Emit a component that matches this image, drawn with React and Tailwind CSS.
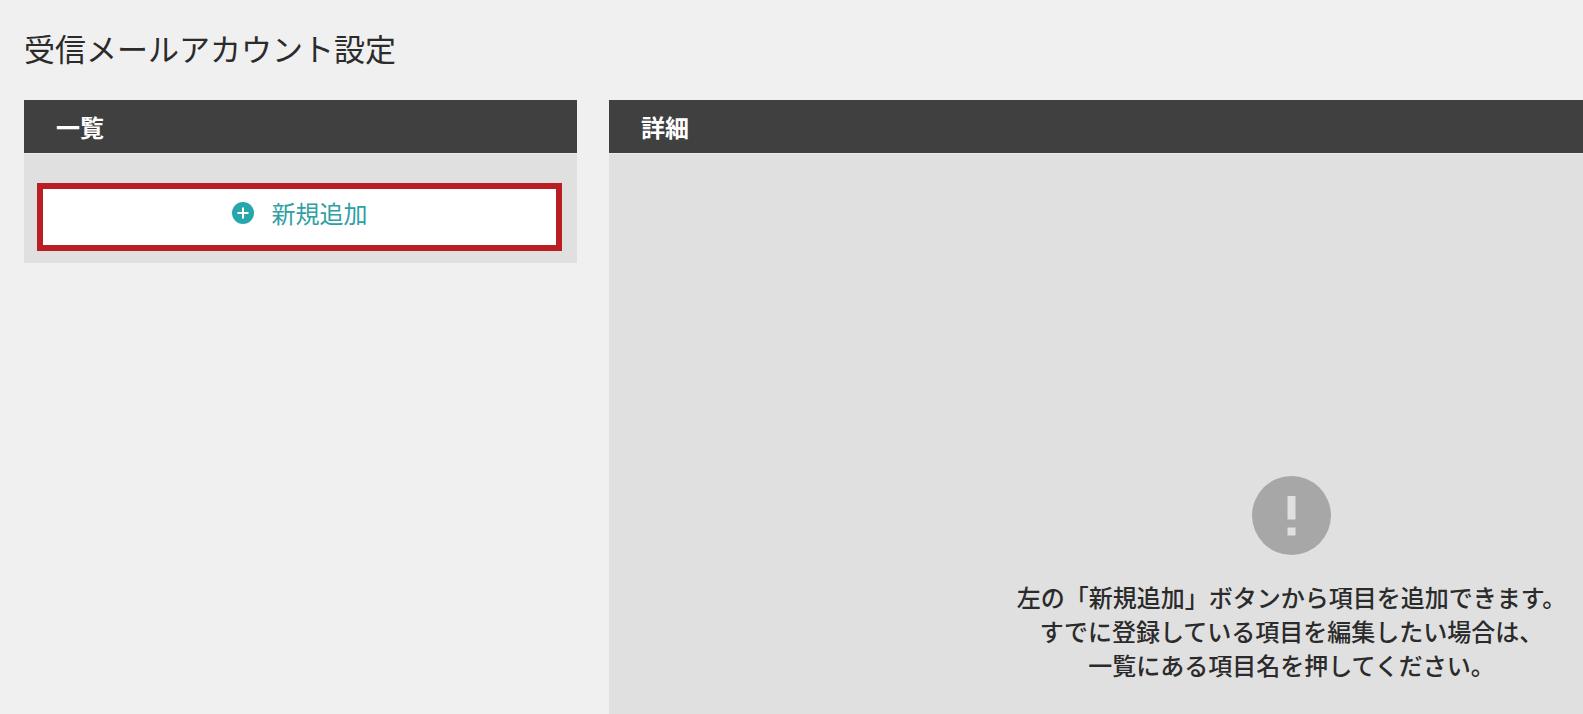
function PlusCircleIcon() {
  return (
    <svg viewBox="0 0 22 22" className="h-[22px] w-[22px] shrink-0" aria-hidden="true">
      <circle cx="11" cy="11" r="11" fill="#27a7ab" />
      <path d="M11 5.5v11M5.5 11h11" stroke="#fff" strokeWidth="2" />
    </svg>
  )
}

function NoticeIcon() {
  return (
    <svg viewBox="0 0 79 79" className="h-[79px] w-[79px]" aria-hidden="true">
      <circle cx="39.5" cy="39.5" r="39.5" fill="#a7a7a7" />
      <path d="M35.5 20h8v23.5h-8zM35.5 51.5h8v8h-8z" fill="#e0e0e0" />
    </svg>
  )
}

function Panel({ title, className, children }) {
  return (
    <section className={className}>
      <h2 className="border-b border-[#ececec] bg-[#404040] bg-clip-padding px-8 pt-[9px] pb-2 text-[24px] leading-9 font-bold text-white">
        {title}
      </h2>
      {children}
    </section>
  )
}

export default function App() {
  return (
    <main
      lang="ja"
      className="flex min-h-screen flex-col overflow-hidden bg-[#f0f0f0] pl-6 font-['Noto_Sans_CJK_JP',sans-serif] text-[#2b2b2b]"
    >
      <h1 className="pt-6 pb-7 text-[31px] leading-12">受信メールアカウント設定</h1>

      <div className="flex flex-1 gap-8">
        <Panel title="一覧" className="w-[553px] shrink-0 self-start bg-[#e0e0e0]">
          <div className="pt-[29px] pr-[15px] pb-3 pl-[13px]">
            <button
              type="button"
              className="flex w-full items-center justify-center gap-[18px] border-6 border-[#b91f22] bg-white pt-1.5 pb-3.5 text-[24px] leading-9 text-[#2fa0a3]"
            >
              <PlusCircleIcon />
              新規追加
            </button>
          </div>
        </Panel>

        {/* the detail pane is wider than the window and runs off its right edge */}
        <Panel title="詳細" className="min-w-[1365px] flex-1 bg-[#e0e0e0]">
          <div className="flex flex-col items-center pt-[322px] pb-6">
            <NoticeIcon />
            <p className="mt-[25px] text-center text-[24px] leading-[34px] font-medium">
              左の「新規追加」ボタンから項目を追加できます。
              <br />
              すでに登録している項目を編集したい場合は、
              <br />
              一覧にある項目名を押してください。
            </p>
          </div>
        </Panel>
      </div>
    </main>
  )
}
